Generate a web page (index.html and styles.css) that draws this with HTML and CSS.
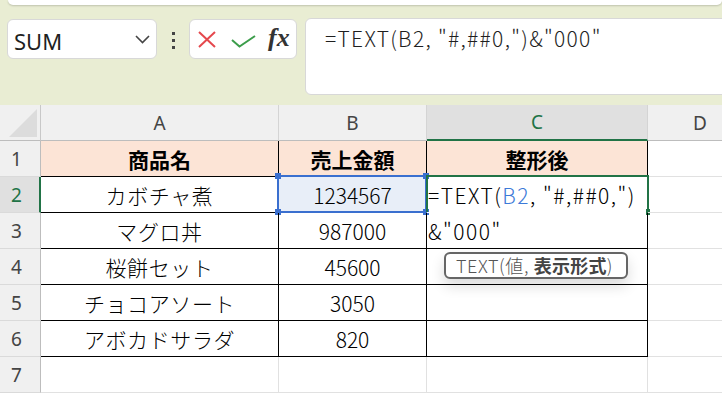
FILE: index.html
```html
<!DOCTYPE html>
<html lang="ja">
<head>
<meta charset="utf-8">
<link rel="stylesheet" href="styles.css">
</head>
<body>
<div class="ribbon">
  <div class="ribbon-edge"></div>
  <div class="fbar">
    <div class="namebox"><span>SUM</span>
      <svg class="chev" width="15" height="9" viewBox="0 0 15 9"><polyline points="1,1 7.5,7.5 14,1" fill="none" stroke="#444" stroke-width="1.6"/></svg>
    </div>
    <div class="dots"><i></i><i></i><i></i></div>
    <div class="btns">
      <svg class="ico-x" width="18" height="17" viewBox="0 0 18 17"><path d="M1 1 L17 16 M17 1 L1 16" stroke="#e5484d" stroke-width="2" fill="none"/></svg>
      <svg class="ico-ok" width="25" height="13" viewBox="0 0 25 13"><polyline points="1,5 8.5,11.5 24,1" fill="none" stroke="#3c9d4b" stroke-width="2"/></svg>
      <span class="fx">fx</span>
    </div>
    <div class="formula">=TEXT(B2, "#,##0,")&amp;"000"</div>
  </div>
</div>
<div class="sheet">
  <div class="corner"><div class="tri"></div></div>
  <div class="ch">A</div>
  <div class="ch">B</div>
  <div class="ch act">C</div>
  <div class="ch">D</div>

  <div class="rh">1</div>
  <div class="c t hd">商品名</div>
  <div class="c t hd">売上金額</div>
  <div class="c t hd">整形後</div>
  <div class="c"></div>

  <div class="rh act">2</div>
  <div class="c t jp">カボチャ煮</div>
  <div class="c t sel">1234567<div class="selbox"><i class="h tl"></i><i class="h tr"></i><i class="h bl"></i><i class="h br"></i></div></div>
  <div class="c t edit">=TEXT(<span class="ref">B2</span>, "#,##0,")<div class="editbox"><i class="gh"></i></div></div>
  <div class="c"></div>

  <div class="rh">3</div>
  <div class="c t jp">マグロ丼</div>
  <div class="c t">987000</div>
  <div class="c t left">&amp;"000"</div>
  <div class="c"></div>

  <div class="rh">4</div>
  <div class="c t jp">桜餅セット</div>
  <div class="c t">45600</div>
  <div class="c t tipcell"><div class="tip">TEXT(値, <b>表示形式</b>)</div></div>
  <div class="c"></div>

  <div class="rh">5</div>
  <div class="c t jp">チョコアソート</div>
  <div class="c t">3050</div>
  <div class="c t"></div>
  <div class="c"></div>

  <div class="rh">6</div>
  <div class="c t jp">アボカドサラダ</div>
  <div class="c t">820</div>
  <div class="c t"></div>
  <div class="c"></div>

  <div class="rh">7</div>
  <div class="c"></div>
  <div class="c"></div>
  <div class="c"></div>
  <div class="c"></div>
</div>
</body>
</html>
```
FILE: styles.css
```css
* { box-sizing: border-box; margin: 0; padding: 0; }
html, body { width: 722px; height: 394px; overflow: hidden; }
body { background: #fff; font-family: "Noto Sans CJK JP", "Noto Sans", sans-serif; }

.ribbon { height: 105px; background: #e9edd3; }
.ribbon-edge {
  height: 5px; margin-left: 8px; background: #fff;
  border-radius: 0 0 8px 8px; box-shadow: 0 1px 2px rgba(0,0,0,.18);
}
.fbar { display: flex; align-items: flex-start; margin-top: 13px; padding-left: 7px; }
.namebox {
  width: 150px; height: 40px; margin-top: 1px; background: #fff;
  border: 1px solid #d8d8d8; border-radius: 6px;
  display: flex; align-items: center; justify-content: space-between;
  padding: 0 6px 0 6px; font-family: "Noto Sans", sans-serif; font-size: 22px; color: #1f1f1f;
}
.namebox span { line-height: 1; padding-top: 3px; }
.dots { width: 32px; display: flex; flex-direction: column; align-items: center; gap: 4px; margin-top: 14px; }
.dots i { display: block; width: 3px; height: 3px; background: #444; }
.btns {
  width: 108px; height: 40px; margin-top: 1px; background: #fff;
  border: 1px solid #d8d8d8; border-radius: 6px;
  display: flex; align-items: center; padding-left: 8px;
}
.ico-ok { margin-left: 15px; margin-top: 5px; }
.fx {
  margin-left: 12px; font-family: "Liberation Serif", serif; font-style: italic; font-weight: bold;
  font-size: 26px; color: #333; line-height: 1; margin-top: -2px;
}
.formula {
  flex: 1; margin-left: 8px; margin-right: -12px; height: 77px; background: #fff;
  border: 1px solid #d8d8d8; border-radius: 6px; padding: 4px 19px;
  font-family: "Noto Sans CJK JP", sans-serif; font-weight: 300; font-size: 21px; line-height: 30px;
  letter-spacing: 1.3px; color: #1f1f1f;
}

.sheet {
  display: grid;
  grid-template-columns: 41px 238px 148px 221px 105px;
  grid-template-rows: repeat(8, 36px) 1px;
  width: 753px;
  font-family: "Noto Sans CJK JP", sans-serif;
}
.corner {
  background: #f0f0f0; border-right: 1px solid #c8c8c8; border-bottom: 1px solid #bdbdbd;
  display: flex; align-items: flex-end; justify-content: flex-end; padding: 0 3px 3px 0;
}
.tri { width: 28px; height: 28px; background: #dcdcdc; clip-path: polygon(100% 0, 100% 100%, 0 100%); }
.ch {
  background: #f0f0f0; border-right: 1px solid #d4d4d4; border-bottom: 1px solid #bdbdbd;
  display: flex; align-items: center; justify-content: center;
  font-family: "Noto Sans", sans-serif; font-size: 19px; color: #444;
}
.ch.act { background: #e0e0e0; color: #217346; border-bottom: 2px solid #217346; }
.rh {
  background: #f0f0f0; border-right: 1px solid #bdbdbd; border-bottom: 1px solid #dadada;
  display: flex; align-items: center; justify-content: center; padding-right: 7px;
  font-family: "Noto Sans", sans-serif; font-size: 19px; color: #444;
}
.rh.act { background: #e0e0e0; color: #217346; border-right: 2px solid #217346; padding-right: 6px; }

.c {
  border-right: 1px solid #e1e1e1; border-bottom: 1px solid #e1e1e1;
  display: flex; align-items: center; justify-content: center;
  font-size: 21px; font-weight: 300; color: #000; white-space: nowrap; position: relative;
}
.c.t { border-right-color: #000; border-bottom-color: #000; }
.c.jp { letter-spacing: 0.6px; }
.c.hd { background: #fce4d6; font-weight: bold; }
.c.left { justify-content: flex-start; padding-left: 1px; letter-spacing: 1.5px; }
.c.edit { justify-content: flex-start; padding-left: 1px; border-bottom-color: #fff; letter-spacing: 1.5px; }
.ref { color: #3d7ad8; }

.c.sel { background: #e8eef8; }
.selbox {
  position: absolute; left: -2px; top: -2px; right: -1px; bottom: -1px;
  border: 2px solid #3a6fcf;
}
.h { position: absolute; width: 6px; height: 6px; background: #3a6fcf; }
.h.tl { left: -4px; top: -4px; }
.h.tr { right: -4px; top: -4px; }
.h.bl { left: -4px; bottom: -4px; }
.h.br { right: -4px; bottom: -4px; }

.editbox {
  position: absolute; left: -1px; top: -2px; right: -2px; bottom: 0;
  border: 2px solid #217346; border-bottom: none;
}
.gh { position: absolute; right: -3px; bottom: -3px; width: 4px; height: 6px; background: #217346; }

.tipcell { justify-content: flex-start; align-items: flex-start; }
.tip {
  position: absolute; left: 17px; top: 3px; width: 184px; height: 27px;
  border: 2px solid #666; border-radius: 6px; background: #fff;
  box-shadow: 0 7px 14px rgba(0,0,0,.14);
  font-size: 18px; font-weight: 300; line-height: 22px; color: #555; padding-left: 10px;
  letter-spacing: 0.6px;
}
.tip b { color: #444; font-weight: bold; letter-spacing: 0.3px; }
```
